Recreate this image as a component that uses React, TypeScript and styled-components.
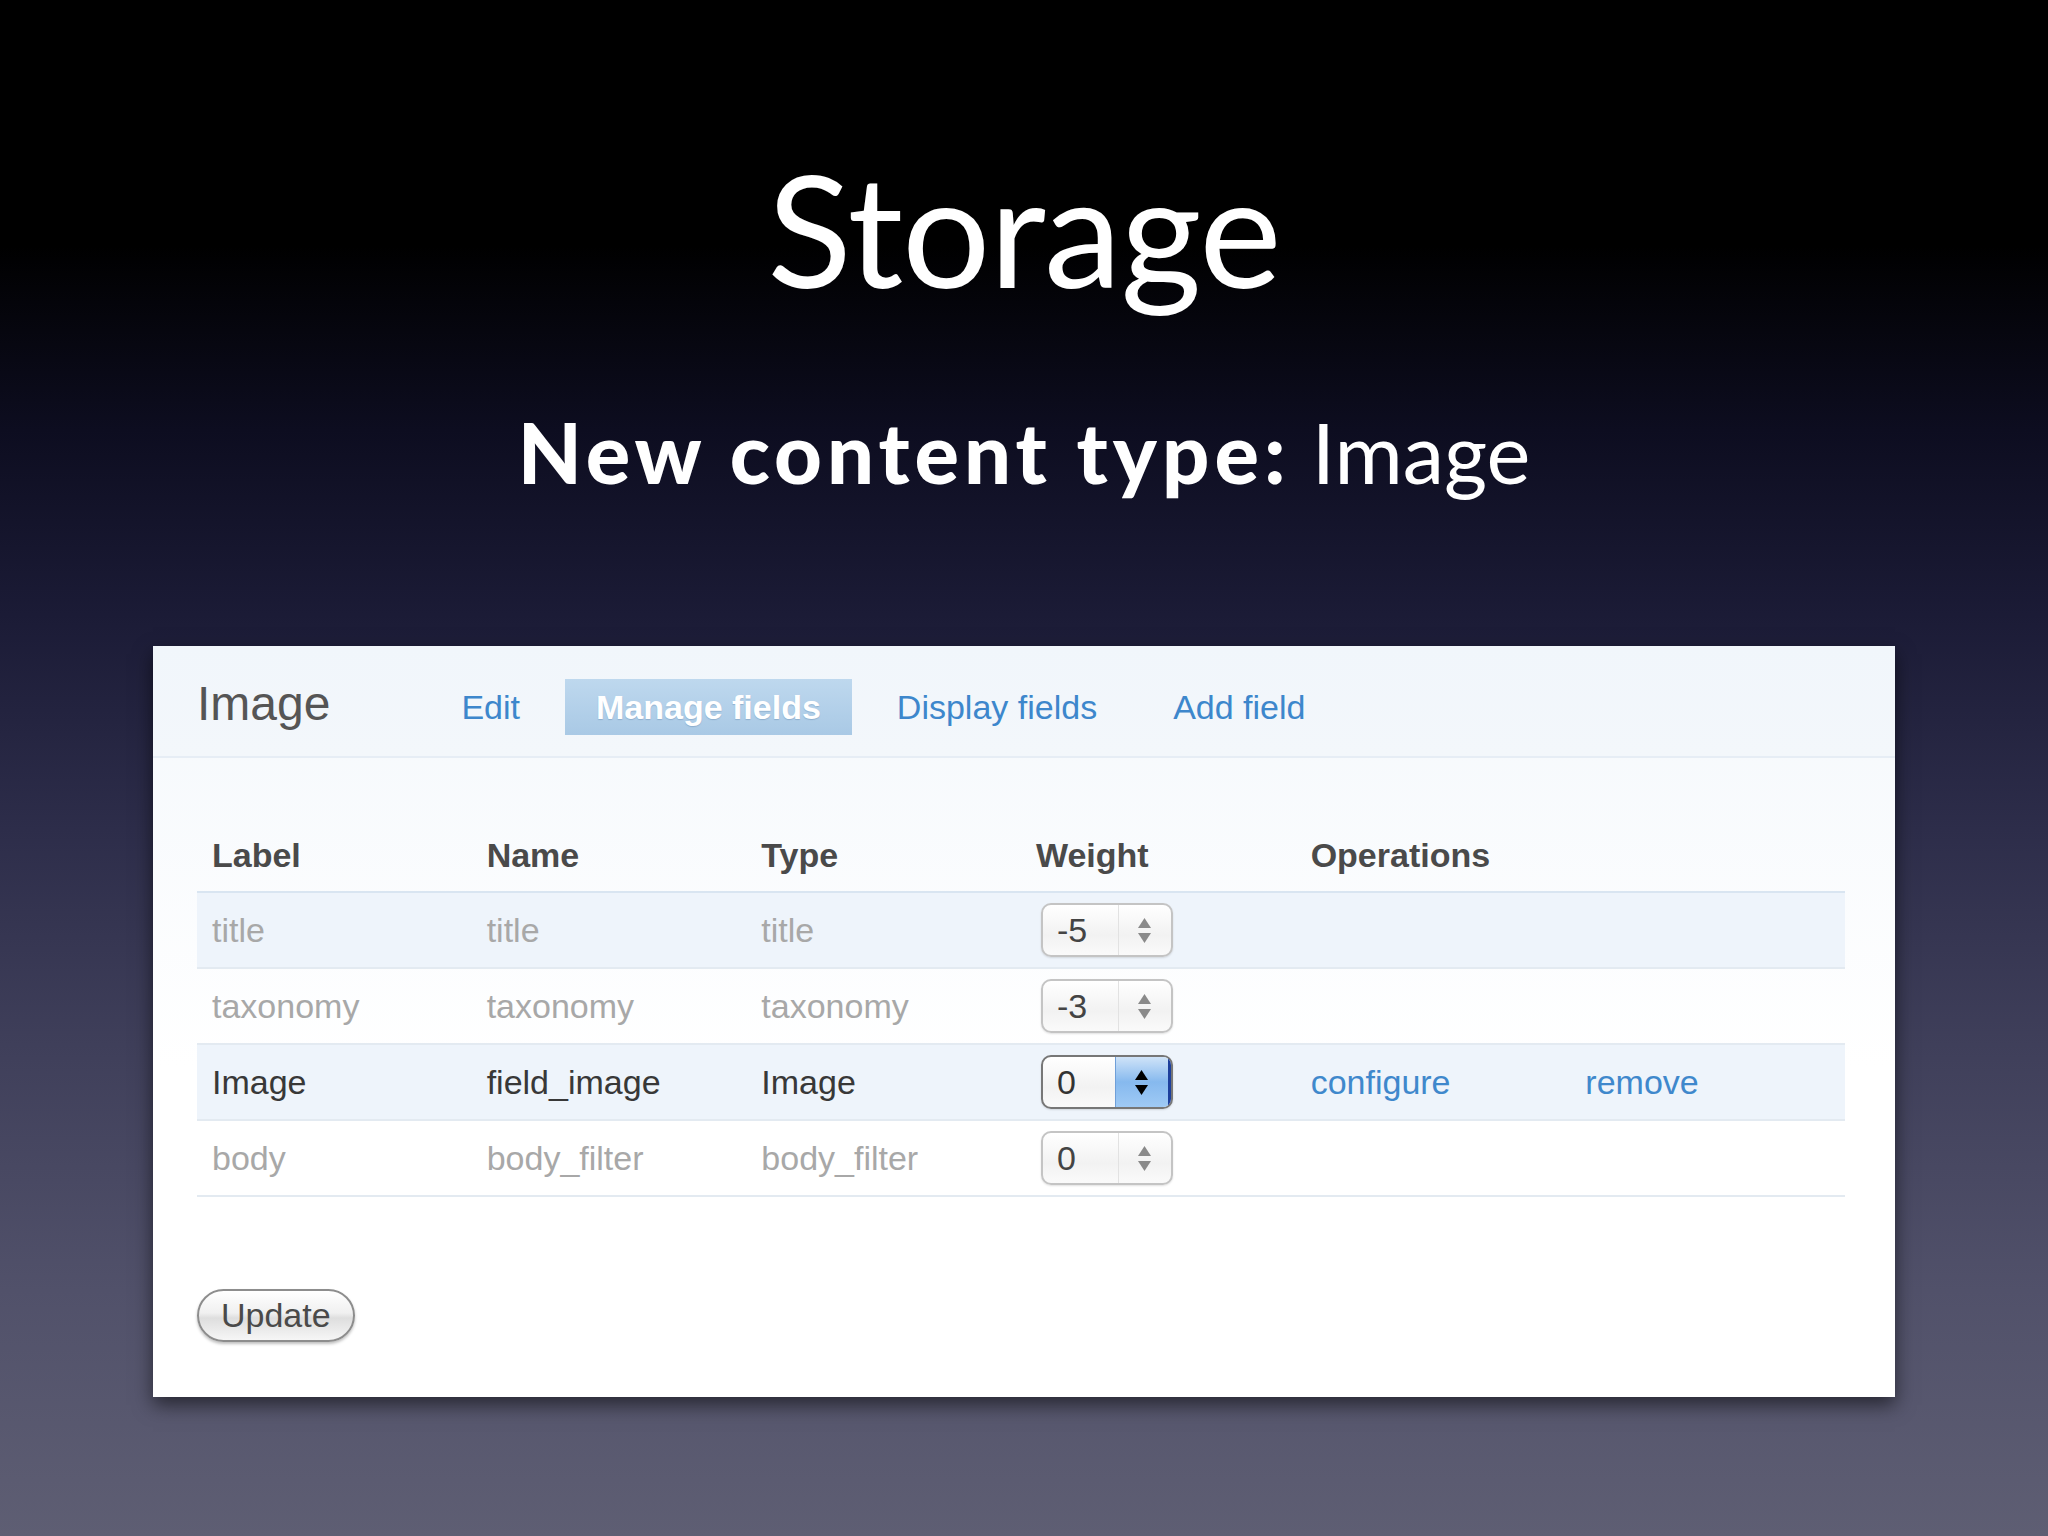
import React from "react";
import styled, { createGlobalStyle } from "styled-components";

const GlobalStyle = createGlobalStyle`
  html, body {
    margin: 0;
    padding: 0;
    height: 100%;
  }
  body {
    background: #000;
    font-family: "Liberation Sans", Arial, sans-serif;
  }
`;

const Slide = styled.div`
  width: 2048px;
  height: 1536px;
  display: flex;
  flex-direction: column;
  align-items: center;
  background: linear-gradient(
    180deg,
    #000 0%,
    #000 16%,
    #0d0d20 28%,
    #1b1b36 40%,
    #2d2d4a 54%,
    #3f3f5a 68%,
    #51516a 84%,
    #5e5e73 100%
  );
  box-sizing: border-box;
  overflow: hidden;
`;

const Title = styled.h1`
  margin: 150px 0 0;
  font-family: Lato, "Open Sans", sans-serif;
  font-weight: 400;
  font-size: 156px;
  line-height: 1;
  color: #fff;
  letter-spacing: -1px;
`;

const Subtitle = styled.h2`
  margin: 105px 0 0;
  font-family: Lato, "Open Sans", sans-serif;
  font-size: 83px;
  line-height: 1;
  color: #fff;
  font-weight: 400;
  letter-spacing: 0;
`;

const Strong = styled.span`
  font-weight: 900;
  letter-spacing: 5px;
`;

const Panel = styled.div`
  margin-top: 152px;
  width: 1742px;
  background: linear-gradient(180deg, #f4f8fc 0%, #ffffff 420px);
  box-shadow: 0 8px 18px rgba(0, 0, 0, 0.55);
  padding: 0 51px 55px 44px;
  box-sizing: border-box;
  color: #333;
`;

const TabBar = styled.div`
  height: 112px;
  display: flex;
  align-items: center;
  margin: 0 -51px 0 -44px;
  padding: 12px 0 0 44px;
  box-sizing: border-box;
  background: linear-gradient(180deg, #f1f6fb 0%, #f3f7fb 100%);
  border-bottom: 2px solid #e6edf5;
`;

const Heading = styled.div`
  font-size: 48px;
  color: #555;
  margin-right: 100px;
  margin-top: -8px;
`;

const Tab = styled.div<{ $active?: boolean }>`
  height: 56px;
  display: flex;
  align-items: center;
  padding: 0 31px;
  margin-right: 14px;
  font-size: 34px;
  font-weight: ${({ $active }) => ($active ? 700 : 400)};
  color: ${({ $active }) => ($active ? "#fff" : "#3d87cc")};
  background: ${({ $active }) =>
    $active ? "linear-gradient(180deg, #bed8ee 0%, #a9c9e5 100%)" : "transparent"};
  text-shadow: ${({ $active }) => ($active ? "0 1px 1px rgba(80,120,160,0.35)" : "none")};
`;

const Table = styled.div`
  margin-top: 61px;
  width: 1648px;
`;

const Row = styled.div<{ $shade?: boolean; $head?: boolean }>`
  display: grid;
  grid-template-columns: repeat(6, 1fr);
  align-items: center;
  height: ${({ $head }) => ($head ? "72px" : "74px")};
  background: ${({ $shade }) => ($shade ? "#eef4fb" : "transparent")};
  border-bottom: 2px solid ${({ $head }) => ($head ? "#d9e5f1" : "#e3eaf1")};
`;

const Cell = styled.div<{ $tone?: "head" | "dim" | "dark" | "link" }>`
  padding-left: 15px;
  font-size: 34px;
  font-weight: ${({ $tone }) => ($tone === "head" ? 700 : 400)};
  color: ${({ $tone }) =>
    $tone === "head"
      ? "#4a4a4a"
      : $tone === "dim"
      ? "#a8a8a8"
      : $tone === "link"
      ? "#3f88cc"
      : "#383838"};
`;

const Spinner = styled.div<{ $active?: boolean }>`
  display: flex;
  width: 132px;
  height: 54px;
  margin-left: 5px;
  box-sizing: border-box;
  border: 2px solid ${({ $active }) => ($active ? "#777" : "#c4c4c4")};
  border-radius: 10px;
  overflow: hidden;
  background: linear-gradient(180deg, #ffffff 0%, #f2f2f2 60%, #fafafa 100%);
  box-shadow: 0 1px 2px rgba(0, 0, 0, 0.12);
`;

const SpinValue = styled.div<{ $active?: boolean }>`
  flex: 1;
  display: flex;
  align-items: center;
  padding-left: 14px;
  font-size: 34px;
  color: ${({ $active }) => ($active ? "#333" : "#444")};
`;

const SpinArrows = styled.div<{ $active?: boolean }>`
  width: 52px;
  display: flex;
  flex-direction: column;
  align-items: center;
  justify-content: center;
  gap: 5px;
  border-left: 1px solid ${({ $active }) => ($active ? "#6f9fd8" : "#e2e2e2")};
  background: ${({ $active }) =>
    $active ? "linear-gradient(180deg, #cfe3f8 0%, #86b9ee 50%, #9fcaf5 100%)" : "transparent"};
  border-right: ${({ $active }) => ($active ? "3px solid #1d3f9c" : "none")};
  color: ${({ $active }) => ($active ? "#000" : "#8a8a8a")};
`;

const Arrow = styled.svg`
  width: 13px;
  height: 10px;
  display: block;
`;

const Footer = styled.div`
  margin-top: 92px;
  display: flex;
`;

const Button = styled.button`
  height: 53px;
  padding: 0 22px;
  border-radius: 27px;
  border: 2px solid #8d8d8d;
  background: linear-gradient(180deg, #ffffff 0%, #f0f0f0 45%, #dedede 55%, #f6f6f6 100%);
  font-family: "Liberation Sans", Arial, sans-serif;
  font-size: 34px;
  color: #4a4a4a;
  box-shadow: 0 2px 3px rgba(0, 0, 0, 0.25);
`;

const ROWS = [
  { label: "title", name: "title", type: "title", weight: "-5", shade: true },
  { label: "taxonomy", name: "taxonomy", type: "taxonomy", weight: "-3" },
  { label: "Image", name: "field_image", type: "Image", weight: "0", shade: true, active: true },
  { label: "body", name: "body_filter", type: "body_filter", weight: "0" }
];

const WeightInput = ({ value, active }: { value: string; active?: boolean }) => (
  <Spinner $active={active}>
    <SpinValue $active={active}>{value}</SpinValue>
    <SpinArrows $active={active}>
      <Arrow viewBox="0 0 13 10">
        <polygon points="6.5,0 13,10 0,10" fill="currentColor" />
      </Arrow>
      <Arrow viewBox="0 0 13 10">
        <polygon points="0,0 13,0 6.5,10" fill="currentColor" />
      </Arrow>
    </SpinArrows>
  </Spinner>
);

const App = () => {
  return (
    <>
      <GlobalStyle />
      <Slide>
        <Title>Storage</Title>
        <Subtitle>
          <Strong>New content type:</Strong> Image
        </Subtitle>

        <Panel>
          <TabBar>
            <Heading>Image</Heading>
            <Tab>Edit</Tab>
            <Tab $active>Manage fields</Tab>
            <Tab>Display fields</Tab>
            <Tab>Add field</Tab>
          </TabBar>

          <Table>
            <Row $head>
              <Cell $tone="head">Label</Cell>
              <Cell $tone="head">Name</Cell>
              <Cell $tone="head">Type</Cell>
              <Cell $tone="head">Weight</Cell>
              <Cell $tone="head">Operations</Cell>
              <Cell />
            </Row>
            {ROWS.map((r) => {
              const tone = r.active ? "dark" : "dim";
              return (
                <Row key={r.label} $shade={r.shade}>
                  <Cell $tone={tone}>{r.label}</Cell>
                  <Cell $tone={tone}>{r.name}</Cell>
                  <Cell $tone={tone}>{r.type}</Cell>
                  <Cell>
                    <WeightInput value={r.weight} active={r.active} />
                  </Cell>
                  <Cell $tone="link">{r.active ? "configure" : ""}</Cell>
                  <Cell $tone="link">{r.active ? "remove" : ""}</Cell>
                </Row>
              );
            })}
          </Table>

          <Footer>
            <Button>Update</Button>
          </Footer>
        </Panel>
      </Slide>
    </>
  );
};

export default App;
